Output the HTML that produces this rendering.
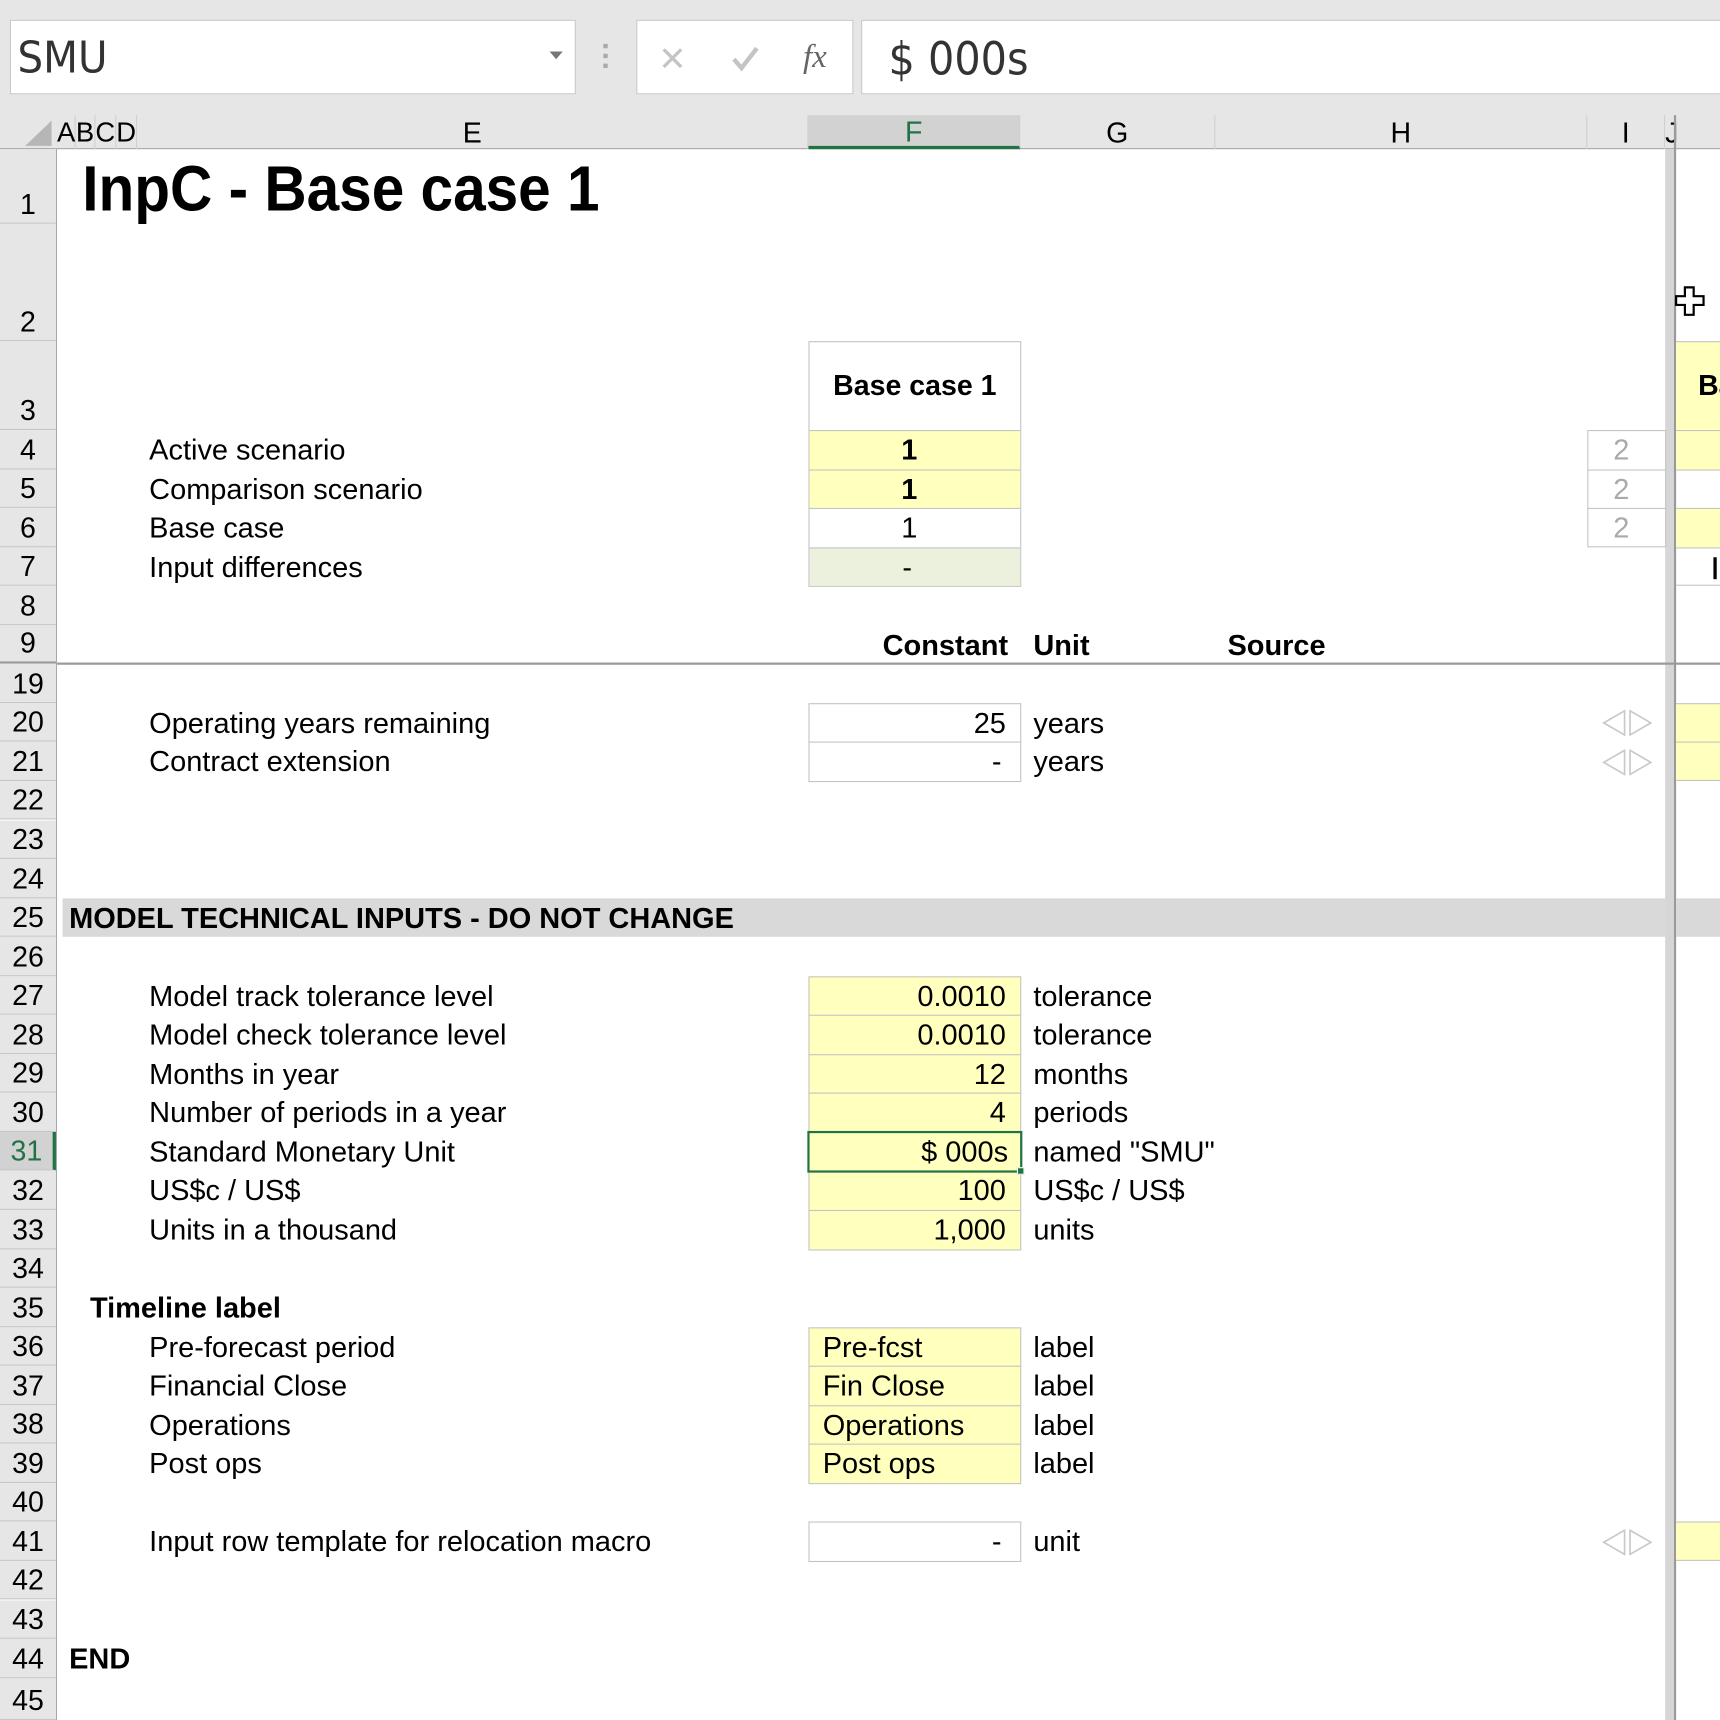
<!DOCTYPE html>
<html><head><meta charset="utf-8"><style>
*{margin:0;padding:0;box-sizing:border-box}
html,body{width:1720px;height:1720px;overflow:hidden;background:#fff}
#w{position:absolute;left:0;top:0;width:1568px;height:1568px;transform:scale(1.09694);transform-origin:0 0;font-family:"Liberation Sans",Arial,sans-serif;color:#000;overflow:hidden;background:#fff}
.a{position:absolute;white-space:nowrap}
.t{font-size:26.4px;height:35.55px;line-height:37px}
.b{font-weight:bold}
.rh{position:absolute;left:0;width:51px;background:#e6e6e6;border-bottom:1px solid #c6c6c6;font-size:26px;text-align:center;display:flex;align-items:flex-end;justify-content:center;padding-bottom:1px;line-height:32px}
.bx{position:absolute;border:1px solid #c4c4c4}
.y{background:#ffffbe}
.hd{position:absolute;top:105px;height:31px;font-size:26px;text-align:center;line-height:32px;border-right:1px solid #d0d0d0}
</style></head><body><div id="w">
<div class="a" style="left:0;top:0;width:1568px;height:136px;background:#e6e6e6;border-bottom:1px solid #a8a8a8"></div>
<div class="a" style="left:9px;top:18px;width:516px;height:68px;background:#fff;border:1px solid #c8c8c8"></div>
<div class="a" style="left:16px;top:25px;font-size:40px;line-height:56px;color:#333;font-family:'DejaVu Sans','Liberation Sans',sans-serif;transform:scaleX(.92);transform-origin:0 0">SMU</div>
<div class="a" style="left:501px;top:47px;width:0;height:0;border-left:6px solid transparent;border-right:6px solid transparent;border-top:7px solid #777"></div>
<div class="a" style="left:550px;top:40px;width:4px;height:4px;background:#aaa;box-shadow:0 9px 0 #aaa,0 18px 0 #aaa"></div>
<div class="a" style="left:580px;top:18px;width:198px;height:68px;background:#fff;border:1px solid #c8c8c8"></div>
<svg class="a" style="left:600px;top:40px" width="26" height="26" viewBox="0 0 26 26"><path d="M5 5L21 21M21 5L5 21" stroke="#c4c4c4" stroke-width="3"/></svg>
<svg class="a" style="left:664px;top:38px" width="30" height="30" viewBox="0 0 30 30"><path d="M5 16L12 24L26 6" stroke="#c4c4c4" stroke-width="4" fill="none"/></svg>
<div class="a" style="left:732px;top:30px;font-family:'Liberation Serif',serif;font-style:italic;font-size:30px;color:#666;line-height:44px">fx</div>
<div class="a" style="left:785px;top:18px;width:800px;height:68px;background:#fff;border:1px solid #c8c8c8"></div>
<div class="a" style="left:810px;top:26px;font-size:41px;line-height:56px;color:#333;font-family:'DejaVu Sans','Liberation Sans',sans-serif;transform:scaleX(.92);transform-origin:0 0">$ 000s</div>
<svg class="a" style="left:22px;top:110px" width="26" height="24"><path d="M25 0L25 23L1 23Z" fill="#b6b6b6"/></svg>
<div class="hd" style="left:52px;width:17px;font-size:25px">A</div>
<div class="hd" style="left:69px;width:18px;font-size:25px">B</div>
<div class="hd" style="left:87px;width:19px;font-size:25px">C</div>
<div class="hd" style="left:106px;width:19px;font-size:25px">D</div>
<div class="hd" style="left:125px;width:612px">E</div>
<div class="hd" style="left:737px;width:193px;background:#d2d2d2;color:#217346;border-bottom:3px solid #217346;line-height:30px">F</div>
<div class="hd" style="left:930px;width:178px">G</div>
<div class="hd" style="left:1108px;width:339px">H</div>
<div class="hd" style="left:1447px;width:71px">I</div>
<div class="hd" style="left:1518px;width:10px;overflow:hidden;text-align:left;border:none">J</div>
<div class="a" style="left:1518px;top:136px;width:8px;height:1432px;background:#d6d6d6"></div>
<div class="a" style="left:1526px;top:105px;width:2px;height:1463px;background:#9a9a9a"></div>
<div class="a" style="left:51px;top:136px;width:1px;height:1432px;background:#a8a8a8"></div>
<div class="rh" style="top:136px;height:68px">1</div>
<div class="rh" style="top:204px;height:107px">2</div>
<div class="rh" style="top:311px;height:81px">3</div>
<div class="rh" style="top:392px;height:35.55px">4</div>
<div class="rh" style="top:427.55px;height:35.55px">5</div>
<div class="rh" style="top:463.1px;height:35.55px">6</div>
<div class="rh" style="top:498.65px;height:35.55px">7</div>
<div class="rh" style="top:534.2px;height:35.55px">8</div>
<div class="rh" style="top:569.75px;height:35.55px;border-bottom:2px solid #999">9</div>
<div class="rh" style="top:605.3px;height:35.55px">19</div>
<div class="rh" style="top:640.85px;height:35.55px">20</div>
<div class="rh" style="top:676.4px;height:35.55px">21</div>
<div class="rh" style="top:711.95px;height:35.55px">22</div>
<div class="rh" style="top:747.5px;height:35.55px">23</div>
<div class="rh" style="top:783.05px;height:35.55px">24</div>
<div class="rh" style="top:818.6px;height:35.55px">25</div>
<div class="rh" style="top:854.15px;height:35.55px">26</div>
<div class="rh" style="top:889.7px;height:35.55px">27</div>
<div class="rh" style="top:925.25px;height:35.55px">28</div>
<div class="rh" style="top:960.8px;height:35.55px">29</div>
<div class="rh" style="top:996.35px;height:35.55px">30</div>
<div class="rh" style="top:1031.9px;height:35.55px;background:#d2d2d2;color:#217346;border-right:3px solid #217346">31</div>
<div class="rh" style="top:1067.45px;height:35.55px">32</div>
<div class="rh" style="top:1103px;height:35.55px">33</div>
<div class="rh" style="top:1138.55px;height:35.55px">34</div>
<div class="rh" style="top:1174.1px;height:35.55px">35</div>
<div class="rh" style="top:1209.65px;height:35.55px">36</div>
<div class="rh" style="top:1245.2px;height:35.55px">37</div>
<div class="rh" style="top:1280.75px;height:35.55px">38</div>
<div class="rh" style="top:1316.3px;height:35.55px">39</div>
<div class="rh" style="top:1351.85px;height:35.55px">40</div>
<div class="rh" style="top:1387.4px;height:35.55px">41</div>
<div class="rh" style="top:1422.95px;height:35.55px">42</div>
<div class="rh" style="top:1458.5px;height:35.55px">43</div>
<div class="rh" style="top:1494.05px;height:35.55px">44</div>
<div class="rh" style="top:1529.6px;height:38.4px">45</div>
<div class="a" style="left:52px;top:604px;width:1516px;height:2px;background:#999"></div>
<div class="a b" style="left:75px;top:140px;font-size:58px;line-height:66px;transform:scaleX(.92);transform-origin:0 0">InpC - Base case 1</div>
<div class="bx" style="left:737px;top:311px;width:194px;height:224px;background:#fff"></div>
<div class="a" style="left:738px;top:392px;width:192px;height:71px;background:#ffffbe"></div>
<div class="a" style="left:738px;top:498.65px;width:192px;height:35.55px;background:#ebf1dc"></div>
<div class="a" style="left:738px;top:392px;width:192px;height:1px;background:#c4c4c4"></div>
<div class="a" style="left:738px;top:427.55px;width:192px;height:1px;background:#c4c4c4"></div>
<div class="a" style="left:738px;top:463.1px;width:192px;height:1px;background:#c4c4c4"></div>
<div class="a" style="left:738px;top:498.65px;width:192px;height:1px;background:#c4c4c4"></div>
<div class="a b" style="left:737px;top:311px;width:194px;height:81px;line-height:81px;text-align:center;font-size:26px">Base case 1</div>
<div class="a t b" style="left:737px;top:392px;width:184px;text-align:center">1</div>
<div class="a t b" style="left:737px;top:427.55px;width:184px;text-align:center">1</div>
<div class="a t" style="left:737px;top:463.1px;width:184px;text-align:center">1</div>
<div class="a t" style="left:737px;top:498.65px;width:180px;text-align:center">-</div>
<div class="a t" style="left:136px;top:392px">Active scenario</div>
<div class="a t" style="left:136px;top:427.55px">Comparison scenario</div>
<div class="a t" style="left:136px;top:463.1px">Base case</div>
<div class="a t" style="left:136px;top:498.65px">Input differences</div>
<div class="bx" style="left:1447px;top:392px;width:72px;height:107px"></div>
<div class="a" style="left:1447px;top:427.55px;width:72px;height:1px;background:#c4c4c4"></div>
<div class="a" style="left:1447px;top:463.1px;width:72px;height:1px;background:#c4c4c4"></div>
<div class="a t" style="left:1447px;top:392px;width:62px;text-align:center;color:#aaa">2</div>
<div class="a t" style="left:1447px;top:427.55px;width:62px;text-align:center;color:#aaa">2</div>
<div class="a t" style="left:1447px;top:463.1px;width:62px;text-align:center;color:#aaa">2</div>
<div class="a" style="left:1528px;top:311px;width:40px;height:81px;background:#ffffbe;border-top:1px solid #c4c4c4"></div>
<div class="a b" style="left:1548px;top:311px;height:81px;line-height:81px;font-size:26px">Ba</div>
<div class="a" style="left:1528px;top:392px;width:40px;height:35.55px;background:#ffffbe;border-top:1px solid #c4c4c4"></div>
<div class="a" style="left:1528px;top:427.55px;width:40px;height:35.55px;border-top:1px solid #c4c4c4"></div>
<div class="a" style="left:1528px;top:463.1px;width:40px;height:35.55px;background:#ffffbe;border-top:1px solid #c4c4c4"></div>
<div class="a" style="left:1528px;top:498.65px;width:40px;height:35.55px;border-top:1px solid #c4c4c4;border-bottom:1px solid #c4c4c4"></div>
<div class="a" style="left:1562px;top:508px;width:3px;height:20px;background:#000"></div>
<div class="a" style="left:1528px;top:640.85px;width:40px;height:71px;background:#ffffbe;border-top:1px solid #c4c4c4;border-bottom:1px solid #c4c4c4"></div>
<div class="a" style="left:1528px;top:676.4px;width:40px;height:1px;background:#c4c4c4"></div>
<div class="a" style="left:1528px;top:1387.4px;width:40px;height:35.55px;background:#ffffbe;border-top:1px solid #c4c4c4;border-bottom:1px solid #c4c4c4"></div>
<svg class="a" style="left:1526px;top:260px" width="30" height="30" viewBox="0 0 30 30"><path d="M10 2H18V10H27V18H18V27H10V18H2V10H10Z" fill="#fff" stroke="#000" stroke-width="2"/></svg>
<div class="a t b" style="left:737px;top:569.75px;width:182px;text-align:right">Constant</div>
<div class="a t b" style="left:942px;top:569.75px">Unit</div>
<div class="a t b" style="left:1119px;top:569.75px">Source</div>
<div class="bx" style="left:737px;top:640.85px;width:194px;height:72px"></div>
<div class="a" style="left:737px;top:676.4px;width:194px;height:1px;background:#c4c4c4"></div>
<div class="a t" style="left:136px;top:640.85px">Operating years remaining</div>
<div class="a t" style="left:136px;top:676.4px">Contract extension</div>
<div class="a t" style="left:737px;top:640.85px;width:180px;text-align:right">25</div>
<div class="a t" style="left:737px;top:676.4px;width:176px;text-align:right">-</div>
<div class="a t" style="left:942px;top:640.85px">years</div>
<div class="a t" style="left:942px;top:676.4px">years</div>
<svg class="a" style="left:1460px;top:647px" width="46" height="24" viewBox="0 0 46 24"><path d="M21 1V23L2 12Z M26 1V23L45 12Z" fill="none" stroke="#c8c8c8" stroke-width="1.5"/></svg>
<svg class="a" style="left:1460px;top:683px" width="46" height="24" viewBox="0 0 46 24"><path d="M21 1V23L2 12Z M26 1V23L45 12Z" fill="none" stroke="#c8c8c8" stroke-width="1.5"/></svg>
<div class="a" style="left:57px;top:818.6px;width:1461px;height:35.55px;background:#d9d9d9"></div>
<div class="a" style="left:1528px;top:818.6px;width:40px;height:35.55px;background:#d9d9d9"></div>
<div class="a t b" style="left:63px;top:818.6px">MODEL TECHNICAL INPUTS - DO NOT CHANGE</div>
<div class="bx y" style="left:737px;top:889.7px;width:194px;height:250px"></div>
<div class="a" style="left:737px;top:925.25px;width:194px;height:1px;background:#c4c4c4"></div>
<div class="a" style="left:737px;top:960.8px;width:194px;height:1px;background:#c4c4c4"></div>
<div class="a" style="left:737px;top:996.35px;width:194px;height:1px;background:#c4c4c4"></div>
<div class="a" style="left:737px;top:1103px;width:194px;height:1px;background:#c4c4c4"></div>
<div class="a" style="left:736px;top:1031px;width:196px;height:38px;border:2px solid #217346"></div>
<div class="a" style="left:927px;top:1064px;width:7px;height:7px;background:#217346;border:1px solid #fff"></div>
<div class="a t" style="left:136px;top:889.7px">Model track tolerance level</div>
<div class="a t" style="left:136px;top:925.25px">Model check tolerance level</div>
<div class="a t" style="left:136px;top:960.8px">Months in year</div>
<div class="a t" style="left:136px;top:996.35px">Number of periods in a year</div>
<div class="a t" style="left:136px;top:1031.9px">Standard Monetary Unit</div>
<div class="a t" style="left:136px;top:1067.45px">US$c / US$</div>
<div class="a t" style="left:136px;top:1103px">Units in a thousand</div>
<div class="a t" style="left:737px;top:889.7px;width:180px;text-align:right">0.0010</div>
<div class="a t" style="left:737px;top:925.25px;width:180px;text-align:right">0.0010</div>
<div class="a t" style="left:737px;top:960.8px;width:180px;text-align:right">12</div>
<div class="a t" style="left:737px;top:996.35px;width:180px;text-align:right">4</div>
<div class="a t" style="left:737px;top:1031.9px;width:182px;text-align:right">$ 000s</div>
<div class="a t" style="left:737px;top:1067.45px;width:180px;text-align:right">100</div>
<div class="a t" style="left:737px;top:1103px;width:180px;text-align:right">1,000</div>
<div class="a t" style="left:942px;top:889.7px">tolerance</div>
<div class="a t" style="left:942px;top:925.25px">tolerance</div>
<div class="a t" style="left:942px;top:960.8px">months</div>
<div class="a t" style="left:942px;top:996.35px">periods</div>
<div class="a t" style="left:942px;top:1031.9px">named "SMU"</div>
<div class="a t" style="left:942px;top:1067.45px">US$c / US$</div>
<div class="a t" style="left:942px;top:1103px">units</div>
<div class="a t b" style="left:82px;top:1174.1px">Timeline label</div>
<div class="bx y" style="left:737px;top:1209.65px;width:194px;height:143px"></div>
<div class="a" style="left:737px;top:1245.2px;width:194px;height:1px;background:#c4c4c4"></div>
<div class="a" style="left:737px;top:1280.75px;width:194px;height:1px;background:#c4c4c4"></div>
<div class="a" style="left:737px;top:1316.3px;width:194px;height:1px;background:#c4c4c4"></div>
<div class="a t" style="left:136px;top:1209.65px">Pre-forecast period</div>
<div class="a t" style="left:136px;top:1245.2px">Financial Close</div>
<div class="a t" style="left:136px;top:1280.75px">Operations</div>
<div class="a t" style="left:136px;top:1316.3px">Post ops</div>
<div class="a t" style="left:750px;top:1209.65px">Pre-fcst</div>
<div class="a t" style="left:750px;top:1245.2px">Fin Close</div>
<div class="a t" style="left:750px;top:1280.75px">Operations</div>
<div class="a t" style="left:750px;top:1316.3px">Post ops</div>
<div class="a t" style="left:942px;top:1209.65px">label</div>
<div class="a t" style="left:942px;top:1245.2px">label</div>
<div class="a t" style="left:942px;top:1280.75px">label</div>
<div class="a t" style="left:942px;top:1316.3px">label</div>
<div class="bx" style="left:737px;top:1387.4px;width:194px;height:36.5px"></div>
<div class="a t" style="left:136px;top:1387.4px">Input row template for relocation macro</div>
<div class="a t" style="left:737px;top:1387.4px;width:176px;text-align:right">-</div>
<div class="a t" style="left:942px;top:1387.4px">unit</div>
<svg class="a" style="left:1460px;top:1394px" width="46" height="24" viewBox="0 0 46 24"><path d="M21 1V23L2 12Z M26 1V23L45 12Z" fill="none" stroke="#c8c8c8" stroke-width="1.5"/></svg>
<div class="a t b" style="left:63px;top:1494.05px">END</div>
</div></body></html>
